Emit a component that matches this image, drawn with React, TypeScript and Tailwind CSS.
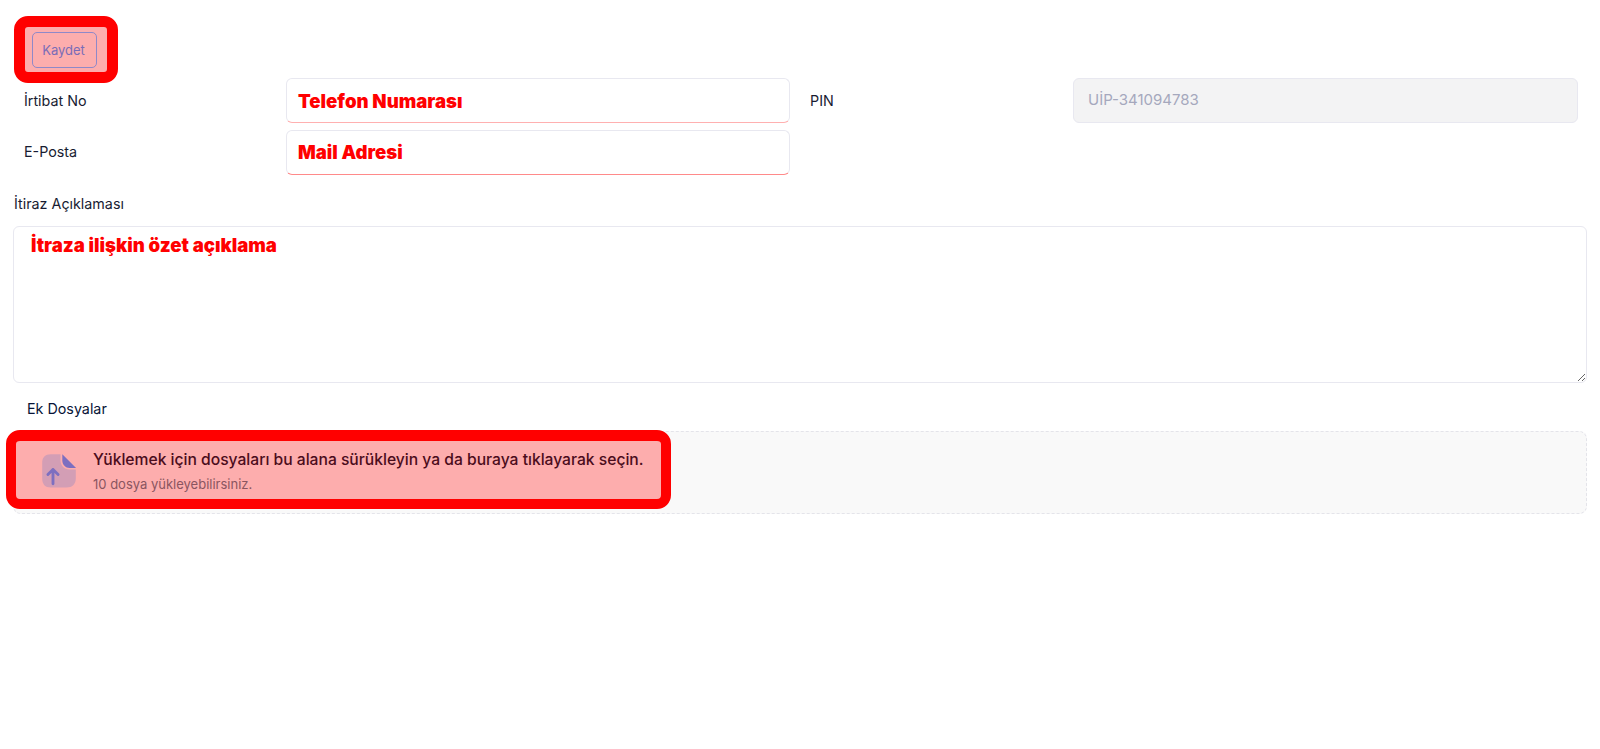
const annotation = "font-['Inter',sans-serif] font-black text-[18.6px] text-[#ff0000]";

const App = () => {
  return (
    <div className="relative min-h-screen bg-white px-[13px] font-['Inter',sans-serif] text-[14.3px] text-[#181c32]">
      {/* Save button with red marker */}
      <div className="pt-[32px] pl-[19px] pb-[10px]">
        <div className="relative w-[65px]">
          <div className="absolute -top-[16px] -left-[18px] h-[67px] w-[104px] rounded-[14px] border-[11px] border-[#ff0000] bg-[#fdadad]" />
          <button className="relative flex h-[36px] w-[65px] items-center justify-center rounded-[5px] border border-[#9088c8] pt-px pr-[2px] text-[13px] text-[#7a6cb8]">
            Kaydet
          </button>
        </div>
      </div>

      {/* Contact fields */}
      <div className="grid grid-cols-[273px_504px_283px_505px] grid-rows-[45px_45px] gap-y-[7px]">
        <label className="pt-[12px] pl-[11px]">İrtibat No</label>
        <div className={`flex items-center rounded-[6px] border border-[#e8e8f0] border-b-[#ffb0b0] px-[11px] pt-[3px] ${annotation}`}>
          Telefon Numarası
        </div>
        <label className="pt-[12px] pl-[20px]">PIN</label>
        <div className="flex items-center rounded-[6px] border border-[#e8e8f0] bg-[#f3f3f4] px-[14px] text-[15px] text-[#a5a8bd]">
          UİP-341094783
        </div>
        <label className="pt-[11px] pl-[11px]">E-Posta</label>
        <div className={`flex items-center rounded-[6px] border border-[#e8e8f0] border-b-[#ff8a8a] px-[11px] ${annotation}`}>
          Mail Adresi
        </div>
      </div>

      {/* Objection description */}
      <div className="pt-[18px] pb-[12px] pl-px">İtiraz Açıklaması</div>
      <textarea
        readOnly
        value="İtraza ilişkin özet açıklama"
        className={`block h-[157px] w-[1574px] resize rounded-[6px] border border-[#e8e8f0] px-[17px] py-[5px] outline-none ${annotation}`}
      />

      {/* Attachments */}
      <div className="pt-[18px] pb-[14px] pl-[14px] leading-[16px] text-[#071437]">Ek Dosyalar</div>
      <div className="relative h-[83px] w-[1574px] rounded-[8px] border border-dashed border-[#e4e4ea] bg-[#f9f9f9]">
        <div className="absolute -top-[2px] -left-[8px] h-[79px] w-[665px] rounded-[14px] border-[10px] border-t-[11px] border-[#ff0000] bg-[#fdadad]" />
        <div className="relative flex items-start gap-[16px] pt-[18px] pl-[27px]">
          <svg width="36" height="36" viewBox="0 0 24 24" className="mt-[3px] shrink-0">
            <path
              d="M6.5 0.8 H13 V5 C13 8.4 15.6 11 19 11 H23.2 V17 C23.2 20.8 20.8 23 17 23 H6.5 C2.8 23 0.8 20.8 0.8 17 V6.5 C0.8 2.8 2.8 0.8 6.5 0.8 Z"
              fill="#d39eb5"
            />
            <path d="M14.2 0.8 L23.4 10 H19 C16.4 10 14.2 7.8 14.2 5 Z" fill="#7d6fc0" />
            <path d="M8 20.5 V11 M4.6 14.4 L8 11 L11.4 14.4" fill="none" stroke="#7d6fc0" strokeWidth="1.9" strokeLinecap="round" strokeLinejoin="round" />
          </svg>
          <div>
            <div className="text-[15.65px] leading-[20px] font-medium text-[#4b0c1c]">
              Yüklemek için dosyaları bu alana sürükleyin ya da buraya tıklayarak seçin.
            </div>
            <div className="mt-[6px] text-[13px] leading-[16px] text-[#8a5560]">10 dosya yükleyebilirsiniz.</div>
          </div>
        </div>
      </div>
    </div>
  );
};

export default App;
